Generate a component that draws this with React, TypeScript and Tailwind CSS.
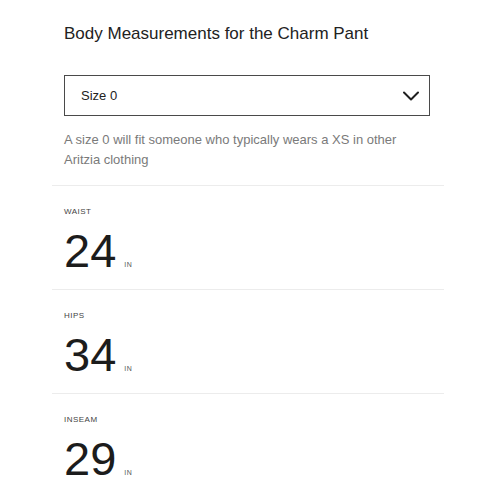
import React from "react";

const measurements = [
  { label: "WAIST", value: "24" },
  { label: "HIPS", value: "34" },
  { label: "INSEAM", value: "29" },
];

function Chevron() {
  return (
    <svg width="16" height="10" viewBox="0 0 16 10" fill="none">
      <path d="M1 1.5L8 8.5L15 1.5" stroke="#1f1f1f" strokeWidth="2" strokeLinecap="round" strokeLinejoin="round" />
    </svg>
  );
}

export default function App() {
  return (
    <div className="w-[495px] h-[495px] overflow-hidden bg-white font-['Liberation_Sans',Arial,sans-serif]">
      <div className="ml-[52px] w-[392px]">
        <div className="px-3 pt-[22px]">
          <h1 className="text-[17px] leading-[24px] text-[#222]">Body Measurements for the Charm Pant</h1>

          {/* size select */}
          <div className="mt-[29px] flex h-[41px] w-[366px] items-center justify-between border-[1.5px] border-[#4a4a4a] pl-4 pr-[10px]">
            <span className="text-[13px] text-[#222]">Size 0</span>
            <Chevron />
          </div>

          <p className="mt-[14px] text-[13px] leading-[20px] text-[#7a7a7a]">
            A size 0 will fit someone who typically wears a XS in other
            <br />
            Aritzia clothing
          </p>
        </div>

        <div className="mt-[15px]">
          {measurements.map((m) => (
            <div key={m.label} className="border-t-[1.5px] border-[#ececec] px-3 pt-[20px] pb-[14px]">
              <div className="text-[8px] leading-[12px] tracking-[0.06em] text-[#444]">{m.label}</div>
              <div className="mt-[9px] flex items-baseline">
                <span className="text-[47px] leading-[48px] text-[#1c1c1c]">{m.value}</span>
                <span className="ml-[8px] text-[7px] tracking-[0.08em] text-[#555]">IN</span>
              </div>
            </div>
          ))}
        </div>
      </div>
    </div>
  );
}
